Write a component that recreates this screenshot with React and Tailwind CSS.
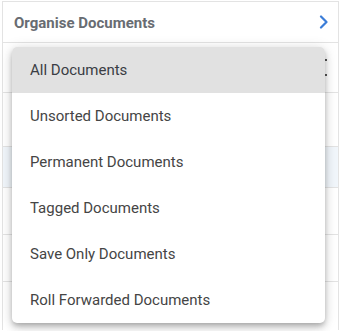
import React from "react";

const options = [
  "All Documents",
  "Unsorted Documents",
  "Permanent Documents",
  "Tagged Documents",
  "Save Only Documents",
  "Roll Forwarded Documents",
];

export default function App() {
  return (
    <div className="relative w-[343px] h-[331px] overflow-hidden bg-white font-['Roboto',sans-serif]">
      {/* table behind the menu */}
      <div className="mt-px ml-[2px] w-[337px] border-x border-t border-[#e3e3e3]">
        <div className="h-[41px] flex items-center justify-between pl-[11px] pr-[9px] border-b border-[#e3e3e3]">
          <span className="mt-[3px] text-[15px] font-bold text-[#686c72]">Organise Documents</span>
          <svg width="10" height="14" viewBox="0 0 10 14" fill="none">
            <path d="M2 1.5 L7.5 7 L2 12.5" stroke="#3b7dd8" strokeWidth="2.2" strokeLinecap="round" strokeLinejoin="round" />
          </svg>
        </div>
        <div className="h-[50px] flex items-center justify-end pr-[11px] border-b border-[#e3e3e3]">
          <div className="flex flex-col gap-[13px]">
            <span className="block w-[3px] h-[2px] bg-[#555]" />
            <span className="block w-[3px] h-[2px] bg-[#555]" />
          </div>
        </div>
        <div className="h-[54px] border-b border-[#e3e3e3]" />
        <div className="h-[41px] bg-[#f1f6fb] border-b border-[#e3e3e3]" />
        <div className="h-[47px] border-b border-[#e3e3e3]" />
        <div className="h-[47px] border-b border-[#e3e3e3]" />
        <div className="h-[48px]" />
      </div>

      {/* dropdown menu */}
      <div className="absolute left-[12px] top-[47px] w-[313px] rounded-[5px] bg-white overflow-hidden shadow-[0_3px_5px_-1px_rgba(0,0,0,0.2),0_5px_8px_0_rgba(0,0,0,0.14),0_1px_14px_0_rgba(0,0,0,0.12)]">
        {options.map((o, i) => (
          <div
            key={o}
            className={`h-[46px] flex items-center pl-[18px] text-[15px] ${
              i === 0 ? "bg-[#e1e1e1] text-[#3a3d44]" : "text-[#454545]"
            }`}
          >
            {o}
          </div>
        ))}
      </div>
    </div>
  );
}
